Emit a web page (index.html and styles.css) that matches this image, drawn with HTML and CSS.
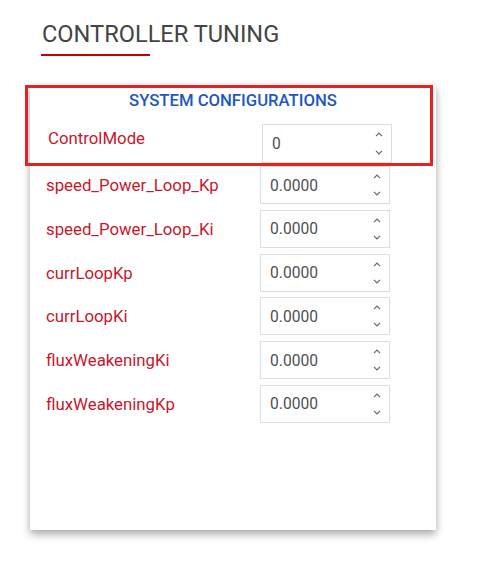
FILE: index.html
```html
<!DOCTYPE html>
<html>
<head>
<meta charset="utf-8">
<link rel="stylesheet" href="styles.css">
</head>
<body>
<div class="page">
  <h1 class="title">CONTROLLER TUNING</h1>
  <div class="underline"></div>
  <div class="card">
    <div class="highlight"></div>
    <div class="card-head">SYSTEM CONFIGURATIONS</div>
    <div class="row row-first">
      <div class="label">ControlMode</div>
      <div class="field field-first"><span class="value">0</span><span class="spin"><svg width="8" height="5" viewBox="0 0 8 5"><polyline points="1,4.2 4,1.2 7,4.2"/></svg><svg width="8" height="5" viewBox="0 0 8 5"><polyline points="1,0.8 4,3.8 7,0.8"/></svg></span></div>
    </div>
    <div class="row">
      <div class="label">speed_Power_Loop_Kp</div>
      <div class="field"><span class="value">0.0000</span><span class="spin"><svg width="8" height="5" viewBox="0 0 8 5"><polyline points="1,4.2 4,1.2 7,4.2"/></svg><svg width="8" height="5" viewBox="0 0 8 5"><polyline points="1,0.8 4,3.8 7,0.8"/></svg></span></div>
    </div>
    <div class="row">
      <div class="label">speed_Power_Loop_Ki</div>
      <div class="field"><span class="value">0.0000</span><span class="spin"><svg width="8" height="5" viewBox="0 0 8 5"><polyline points="1,4.2 4,1.2 7,4.2"/></svg><svg width="8" height="5" viewBox="0 0 8 5"><polyline points="1,0.8 4,3.8 7,0.8"/></svg></span></div>
    </div>
    <div class="row">
      <div class="label">currLoopKp</div>
      <div class="field"><span class="value">0.0000</span><span class="spin"><svg width="8" height="5" viewBox="0 0 8 5"><polyline points="1,4.2 4,1.2 7,4.2"/></svg><svg width="8" height="5" viewBox="0 0 8 5"><polyline points="1,0.8 4,3.8 7,0.8"/></svg></span></div>
    </div>
    <div class="row">
      <div class="label">currLoopKi</div>
      <div class="field"><span class="value">0.0000</span><span class="spin"><svg width="8" height="5" viewBox="0 0 8 5"><polyline points="1,4.2 4,1.2 7,4.2"/></svg><svg width="8" height="5" viewBox="0 0 8 5"><polyline points="1,0.8 4,3.8 7,0.8"/></svg></span></div>
    </div>
    <div class="row">
      <div class="label">fluxWeakeningKi</div>
      <div class="field"><span class="value">0.0000</span><span class="spin"><svg width="8" height="5" viewBox="0 0 8 5"><polyline points="1,4.2 4,1.2 7,4.2"/></svg><svg width="8" height="5" viewBox="0 0 8 5"><polyline points="1,0.8 4,3.8 7,0.8"/></svg></span></div>
    </div>
    <div class="row">
      <div class="label">fluxWeakeningKp</div>
      <div class="field"><span class="value">0.0000</span><span class="spin"><svg width="8" height="5" viewBox="0 0 8 5"><polyline points="1,4.2 4,1.2 7,4.2"/></svg><svg width="8" height="5" viewBox="0 0 8 5"><polyline points="1,0.8 4,3.8 7,0.8"/></svg></span></div>
    </div>
  </div>
</div>
</body>
</html>
```

FILE: styles.css
```css
* { box-sizing: border-box; }
html, body { margin: 0; padding: 0; background: #fff; }
body { font-family: Roboto, "Liberation Sans", sans-serif; }

.page { padding: 20px 0 37px; }

.title {
  margin: 0;
  padding-left: 42px;
  font-size: 23.6px;
  line-height: 28px;
  font-weight: 400;
  color: #444;
}

.underline {
  margin: 6px 0 0 41px;
  width: 109px;
  height: 2px;
  background: #c40000;
}

.card {
  position: relative;
  margin: 29px 0 0 30px;
  width: 406px;
  height: 445px;
  padding-top: 6px;
  background: #fff;
  box-shadow: 0 5px 8px rgba(0,0,0,0.28), 0 0 7px rgba(0,0,0,0.10);
}

.highlight {
  position: absolute;
  left: -5px;
  top: 0;
  width: 408px;
  height: 81px;
  border: 3px solid #e32323;
  pointer-events: none;
}

.card-head {
  text-align: center;
  font-size: 16.7px;
  line-height: 19px;
  font-weight: 500;
  color: #2356c0;
}

.row {
  display: flex;
  align-items: center;
  padding-left: 16px;
  margin-top: 5.8px;
}

.row-first {
  align-items: flex-start;
  padding-left: 18px;
  margin-top: 14px;
}

.row-first + .row { margin-top: 3px; }

.label {
  width: 214px;
  font-size: 16.8px;
  line-height: 20px;
  color: #c8172b;
}

.row-first .label { padding-top: 4px; }

.field {
  display: flex;
  align-items: center;
  justify-content: space-between;
  width: 130px;
  height: 38px;
  border: 1px solid #dedede;
  padding: 0 8px 0 9px;
}

.field-first { height: 39px; }

.value {
  font-size: 15.6px;
  color: #505050;
  padding-top: 1px;
}

.spin {
  display: flex;
  flex-direction: column;
  justify-content: space-between;
  height: 100%;
  padding: 7px 0;
}

.spin svg { display: block; }
.spin polyline { fill: none; stroke: #666; stroke-width: 1.2; }
```
